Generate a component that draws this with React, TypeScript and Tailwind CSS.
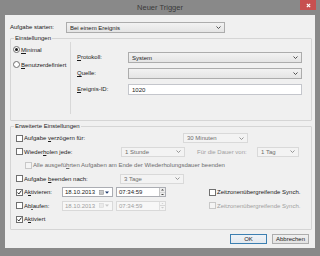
import type { ReactNode } from "react"

function Check({ checked, disabled }: { checked?: boolean; disabled?: boolean }) {
  return (
    <span
      className={`w-[7px] h-[7px] border shrink-0 flex items-center justify-center ${
        disabled ? "border-[#c8c8c8] bg-[#f4f4f4]" : "border-[#707070] bg-white"
      }`}
    >
      {checked && (
        <svg viewBox="0 0 7 7" className="w-[5px] h-[5px]">
          <path d="M0.8 3.6 L2.6 5.6 L6.2 0.8" stroke="#1a1a1a" strokeWidth="1.3" fill="none" />
        </svg>
      )}
    </span>
  )
}

function Radio({ checked }: { checked?: boolean }) {
  return (
    <span className="w-[7px] h-[7px] rounded-full border border-[#707070] bg-white shrink-0 flex items-center justify-center">
      {checked && <span className="w-[3px] h-[3px] rounded-full bg-[#1a1a1a]" />}
    </span>
  )
}

function Chevron({ light }: { light?: boolean }) {
  return (
    <svg viewBox="0 0 5 3" className="w-[5px] h-[3px] shrink-0">
      <path d="M0.5 0.5 L2.5 2.5 L4.5 0.5" stroke={light ? "#8a8a8a" : "#3c3c3c"} strokeWidth="0.9" fill="none" />
    </svg>
  )
}

function Combo({ cls, text, disabled }: { cls: string; text?: string; disabled?: boolean }) {
  return (
    <div
      className={`border flex items-center pl-[3px] pr-[3px] shrink-0 ${
        disabled
          ? "border-[#d9d9d9] bg-[#f3f3f3] text-[#6d6d6d]"
          : "border-[#acacac] bg-gradient-to-b from-[#f2f2f2] to-[#e4e4e4]"
      } ${cls}`}
    >
      <span className="flex-1 leading-none truncate">{text}</span>
      <Chevron light={disabled} />
    </div>
  )
}

function DateBox({ disabled }: { disabled?: boolean }) {
  return (
    <div
      className={`w-[51px] h-[10px] border flex items-center pl-[2px] pr-[3px] shrink-0 ${
        disabled ? "border-[#d9d9d9] bg-[#f7f7f7] text-[#a0a0a0]" : "border-[#abadb3] bg-white"
      }`}
    >
      <span className="flex-1 leading-none">18.10.2013</span>
      <svg viewBox="0 0 6 6" className="w-[5px] h-[5px] shrink-0">
        <rect x="0.5" y="0.5" width="5" height="5" fill={disabled ? "#e6e6e6" : "#b8b8b8"} stroke={disabled ? "#d0d0d0" : "#8a8a8a"} strokeWidth="0.6" />
        <path d="M0.5 2 H5.5 M2.2 2 V5.5 M3.8 2 V5.5" stroke={disabled ? "#f4f4f4" : "#e8e8e8"} strokeWidth="0.5" />
      </svg>
      <svg viewBox="0 0 4 3" className="w-[4px] h-[3px] ml-[1px] shrink-0">
        <path d="M0 0.5 H4 L2 2.8 Z" fill={disabled ? "#c8c8c8" : "#1e3a6e"} />
      </svg>
    </div>
  )
}

function TimeBox({ disabled }: { disabled?: boolean }) {
  const c = disabled ? "#c8c8c8" : "#444"
  return (
    <div
      className={`w-[50px] h-[10px] border flex shrink-0 ${
        disabled ? "border-[#d9d9d9] bg-[#f7f7f7] text-[#a0a0a0]" : "border-[#abadb3] bg-white"
      }`}
    >
      <span className="flex-1 pl-[2px] leading-none flex items-center">07:34:59</span>
      <div className={`w-[6px] border-l flex flex-col ${disabled ? "border-[#e0e0e0] bg-[#f4f4f4]" : "border-[#c4c4c4] bg-[#ededed]"}`}>
        <div className="flex-1 flex items-center justify-center border-b border-[#d6d6d6]">
          <svg viewBox="0 0 4 2" className="w-[3px] h-[1.5px]"><path d="M0 2 L2 0 L4 2 Z" fill={c} /></svg>
        </div>
        <div className="flex-1 flex items-center justify-center">
          <svg viewBox="0 0 4 2" className="w-[3px] h-[1.5px]"><path d="M0 0 L2 2 L4 0 Z" fill={c} /></svg>
        </div>
      </div>
    </div>
  )
}

function Row({ children }: { children: ReactNode }) {
  return <div className="h-[13.5px] flex items-center pl-[5px]">{children}</div>
}

export default function App() {
  return (
    <div className="w-[320px] h-[256px] bg-[#898989] flex flex-col font-['Liberation_Sans',Arial,sans-serif] text-[6px] text-[#1b1b1b] overflow-hidden select-none">
      {/* Title bar */}
      <div className="h-[15px] shrink-0 flex items-start">
        <div className="w-[20px]" />
        <div className="flex-1 text-center text-[7.5px] leading-[16px] text-[#3a3a3a]">Neuer Trigger</div>
        <div className="w-[16px] h-[10px] mr-[4px] bg-[#c75050] flex items-center justify-center">
          <svg viewBox="0 0 6 6" className="w-[5px] h-[5px]">
            <path d="M1 1 L5 5 M5 1 L1 5" stroke="white" strokeWidth="1.4" />
          </svg>
        </div>
      </div>

      {/* Client area */}
      <div className="mx-[5px] h-[233px] bg-[#f0f0f0] flex flex-col pl-[5px] pr-[3px]">
        <div className="mt-[7px] h-[11px] flex items-center">
          <span className="w-[56px] shrink-0">Aufgabe starten:</span>
          <Combo cls="w-[159px] h-[11px]" text="Bei einem Ereignis" />
        </div>

        {/* Einstellungen */}
        <fieldset className="mt-[2px] h-[86px] border border-[#d5d5d5] rounded-[1px]">
          <legend className="ml-[3px] px-[1px] leading-[7px]">Einstellungen</legend>
          <div className="h-[78px] flex">
            <div className="w-[60px] mb-[6px] border-r border-[#d8d8d8] pl-[2px] flex flex-col">
              <label className="mt-[4px] h-[7px] flex items-center gap-[1px]">
                <Radio checked />
                <span className="leading-none"><u>M</u>inimal</span>
              </label>
              <label className="mt-[8px] h-[7px] flex items-center gap-[1px]">
                <Radio />
                <span className="leading-none"><u>B</u>enutzerdefiniert</span>
              </label>
            </div>
            <div className="flex-1 pl-[6px] pr-[9px] pt-[10px] flex flex-col gap-[5px]">
              <div className="h-[11px] flex items-center">
                <span className="w-[51px] shrink-0"><u>P</u>rotokoll:</span>
                <Combo cls="flex-1 h-[11px]" text="System" />
              </div>
              <div className="h-[11px] flex items-center">
                <span className="w-[51px] shrink-0"><u>Q</u>uelle:</span>
                <Combo cls="flex-1 h-[11px]" text="" />
              </div>
              <div className="h-[11px] flex items-center">
                <span className="w-[51px] shrink-0"><u>E</u>reignis-ID:</span>
                <div className="flex-1 h-[11px] border border-[#c4c6cc] bg-white pl-[3px] flex items-center leading-none">1020</div>
              </div>
            </div>
          </div>
        </fieldset>

        {/* Erweiterte Einstellungen */}
        <fieldset className="mt-[1.5px] h-[107.5px] border border-[#d5d5d5] rounded-[1px]">
          <legend className="ml-[3px] px-[1px] leading-[7px]">Erweiterte Einstellungen</legend>
          <div className="pt-[2px] flex flex-col">
            <Row>
              <div className="w-[167px] shrink-0 flex items-center gap-[1px]">
                <Check />
                <span className="leading-none">Aufgabe <u>v</u>erzögern für:</span>
              </div>
              <Combo cls="w-[65px] h-[10px]" text="30 Minuten" disabled />
            </Row>
            <Row>
              <div className="w-[105px] shrink-0 flex items-center gap-[1px]">
                <Check />
                <span className="leading-none">Wieder<u>h</u>olen jede:</span>
              </div>
              <Combo cls="w-[64px] h-[10px]" text="1 Stunde" disabled />
              <span className="w-[60px] ml-[12px] shrink-0 text-[#a0a0a0] leading-none">Für die Dauer von:</span>
              <Combo cls="w-[42px] h-[10px]" text="1 Tag" disabled />
            </Row>
            <Row>
              <div className="ml-[9px] flex items-center gap-[1px]">
                <Check disabled />
                <span className="leading-none text-[#6d6d6d]">Alle ausgefü<u>h</u>rten Aufgaben am Ende der Wiederholungsdauer beenden</span>
              </div>
            </Row>
            <Row>
              <div className="w-[104px] shrink-0 flex items-center gap-[1px]">
                <Check />
                <span className="leading-none">Aufgabe <u>b</u>eenden nach:</span>
              </div>
              <Combo cls="w-[64px] h-[10px]" text="3 Tage" disabled />
            </Row>
            <Row>
              <div className="w-[46px] shrink-0 flex items-center gap-[1px]">
                <Check checked />
                <span className="leading-none">A<u>k</u>tivieren:</span>
              </div>
              <DateBox />
              <div className="ml-[3px]"><TimeBox /></div>
              <div className="ml-[43px] flex items-center gap-[1px]">
                <Check />
                <span className="leading-none">Zeitzonenübergreifende Synch.</span>
              </div>
            </Row>
            <Row>
              <div className="w-[46px] shrink-0 flex items-center gap-[1px]">
                <Check />
                <span className="leading-none">Ab<u>l</u>aufen:</span>
              </div>
              <DateBox disabled />
              <div className="ml-[3px]"><TimeBox disabled /></div>
              <div className="ml-[43px] flex items-center gap-[1px]">
                <Check disabled />
                <span className="leading-none text-[#a0a0a0]">Zeitzonenübergreifende Synch.</span>
              </div>
            </Row>
            <Row>
              <div className="flex items-center gap-[1px]">
                <Check checked />
                <span className="leading-none">A<u>k</u>tiviert</span>
              </div>
            </Row>
          </div>
        </fieldset>

        {/* Buttons */}
        <div className="mt-[4px] flex justify-end gap-[5px] mr-[3px]">
          <button className="w-[37px] h-[10px] border border-[#3c7fb1] bg-gradient-to-b from-[#eef3f8] to-[#e3e8ee] flex items-center justify-center leading-none">
            OK
          </button>
          <button className="w-[37px] h-[10px] border border-[#adadad] bg-gradient-to-b from-[#f0f0f0] to-[#e3e3e3] flex items-center justify-center leading-none">
            Abbrechen
          </button>
        </div>
      </div>
    </div>
  )
}
